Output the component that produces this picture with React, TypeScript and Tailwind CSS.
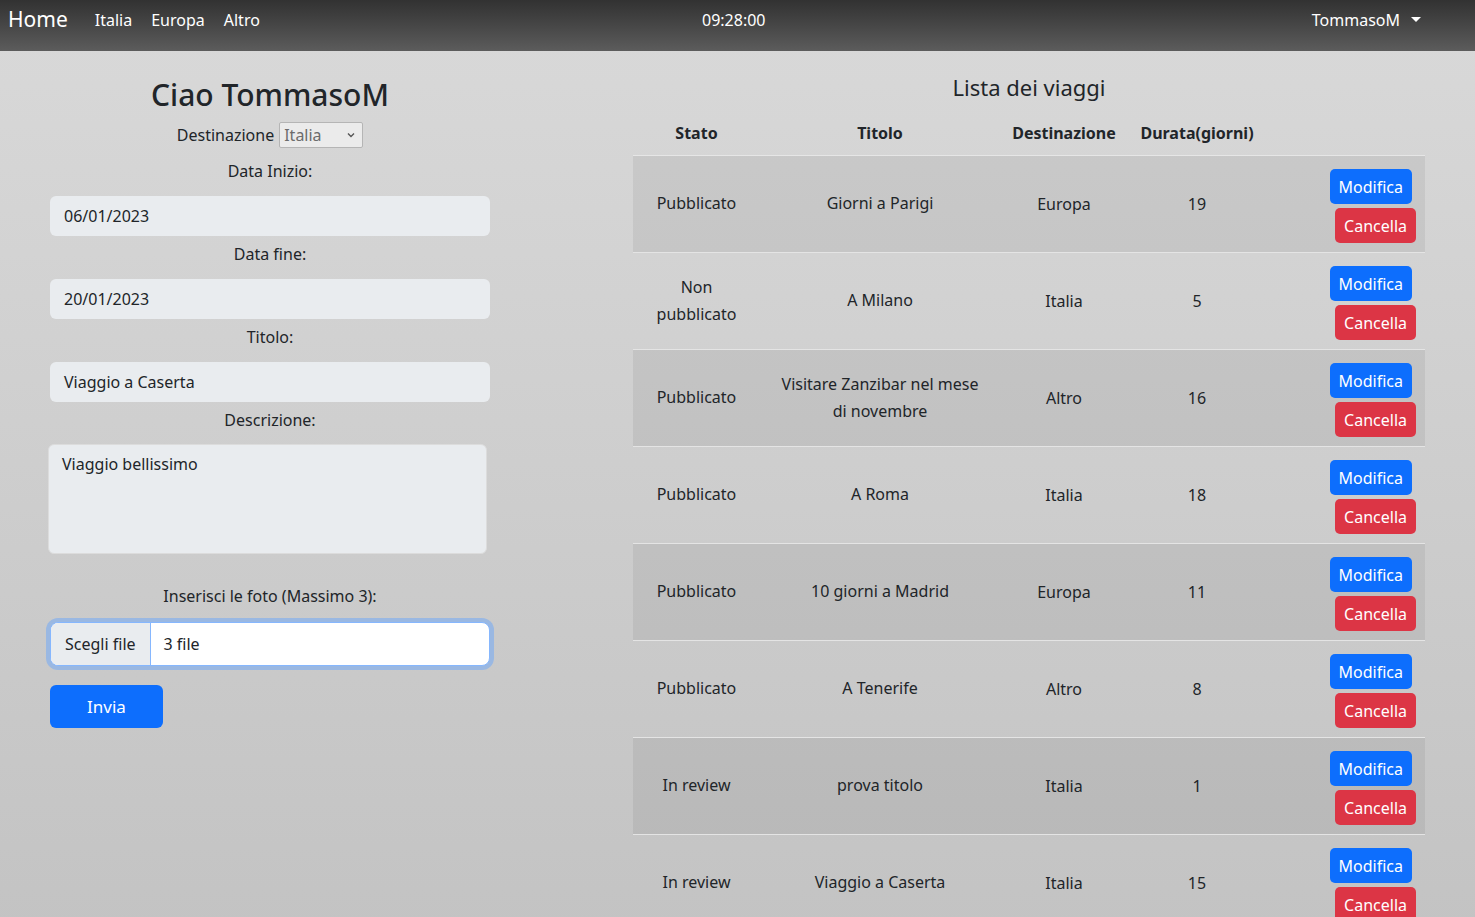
const trips = [
  { stato: 'Pubblicato', titolo: 'Giorni a Parigi', dest: 'Europa', durata: 19 },
  { stato: 'Non pubblicato', titolo: 'A Milano', dest: 'Italia', durata: 5 },
  { stato: 'Pubblicato', titolo: 'Visitare Zanzibar nel mese di novembre', dest: 'Altro', durata: 16 },
  { stato: 'Pubblicato', titolo: 'A Roma', dest: 'Italia', durata: 18 },
  { stato: 'Pubblicato', titolo: '10 giorni a Madrid', dest: 'Europa', durata: 11 },
  { stato: 'Pubblicato', titolo: 'A Tenerife', dest: 'Altro', durata: 8 },
  { stato: 'In review', titolo: 'prova titolo', dest: 'Italia', durata: 1 },
  { stato: 'In review', titolo: 'Viaggio a Caserta', dest: 'Italia', durata: 15 },
];

function Field({ label, value }: { label: string; value: string }) {
  return (
    <>
      <div className="text-center leading-6 mt-[6px] mb-[13px]">{label}</div>
      <div className="h-[40px] rounded-[6px] bg-[#e9ecef] px-[14px] flex items-center">{value}</div>
    </>
  );
}

export default function App() {
  return (
    <div
      className="min-h-[917px] text-[#212529] text-[16px] bg-gradient-to-b from-[#d9d9d9] to-[#c3c3c3]"
      style={{ fontFamily: '"Noto Sans", sans-serif' }}
    >
      <nav className="h-[51px] bg-gradient-to-b from-[#323232] to-[#5c5c5c] text-white flex items-center relative">
        <span className="ml-[8px] text-[21px] -mt-[11px]">Home</span>
        <div className="flex gap-[19px] ml-[27px] -mt-[12px] text-[16px]">
          <span>Italia</span>
          <span>Europa</span>
          <span>Altro</span>
        </div>
        <span className="absolute left-[702px] top-[8px] text-[16px]">09:28:00</span>
        <div className="ml-auto mr-[54px] -mt-[12px] flex items-center gap-[11px]">
          <span>TommasoM</span>
          <span className="w-0 h-0 border-l-[5px] border-r-[5px] border-t-[5px] border-l-transparent border-r-transparent border-t-white" />
        </div>
      </nav>

      <div className="flex">
        <div className="ml-[50px] w-[440px]">
          <h1 className="text-center text-[30px] font-medium mt-[25px] leading-[38px]">Ciao TommasoM</h1>
          <div className="flex justify-center items-center gap-[5px] mt-[8px] mb-[11px]">
            <span>Destinazione</span>
            <span className="h-[26px] w-[84px] border border-[#b5b5b5] bg-[#ebebeb] text-[#6c6c6c] flex items-center justify-between px-[4px] rounded-[2px]">
              Italia
              <svg width="10" height="10" viewBox="0 0 10 10" className="mr-[2px]">
                <path d="M2 3.5 L5 6.5 L8 3.5" fill="none" stroke="#555" strokeWidth="1.4" />
              </svg>
            </span>
          </div>
          <Field label="Data Inizio:" value="06/01/2023" />
          <Field label="Data fine:" value="20/01/2023" />
          <Field label="Titolo:" value="Viaggio a Caserta" />
          <div className="text-center leading-6 mt-[6px] mb-[12px]">Descrizione:</div>
          <div className="h-[110px] w-[439px] -ml-[2px] rounded-[6px] bg-[#e9ecef] border border-[#dcdcdc] px-[13px] py-[7px]">Viaggio bellissimo</div>
          <div className="text-center leading-6 mt-[30px] mb-[14px]">Inserisci le foto (Massimo 3):</div>
          <div className="h-[44px] rounded-[8px] ring-4 ring-[#9ab8e2] border border-[#86b7fe] bg-white flex overflow-hidden">
            <span className="bg-[#e9ecef] px-[14px] flex items-center border-r border-[#86b7fe]">Scegli file</span>
            <span className="px-[13px] flex items-center">3 file</span>
          </div>
          <button className="mt-[19px] w-[113px] h-[43px] rounded-[6px] bg-[#0d6efd] text-white text-[17px]">Invia</button>
        </div>

        <div className="ml-[143px] w-[792px]">
          <h2 className="text-center text-[22px] mt-[21px] leading-[30px]">Lista dei viaggi</h2>
          <table className="w-full mt-[11px] border-collapse text-center">
            <thead>
              <tr className="h-[42px] border-b border-[#e6e6e6]">
                <th className="w-[127px] font-bold pb-[2px]">Stato</th>
                <th className="w-[240px] font-bold pb-[2px]">Titolo</th>
                <th className="w-[128px] font-bold pb-[2px]">Destinazione</th>
                <th className="w-[138px] font-bold pb-[2px]">Durata(giorni)</th>
                <th />
              </tr>
            </thead>
            <tbody>
              {trips.map((t, i) => (
                <tr key={i} className={`h-[97px] border-b border-[#e4e4e4] ${i % 2 === 0 ? 'bg-black/[0.06]' : ''}`}>
                  <td className="px-[8px] leading-[27px]">{t.stato}</td>
                  <td className="px-[20px] leading-[27px]">{t.titolo}</td>
                  <td className="px-[8px]">{t.dest}</td>
                  <td className="px-[8px]">{t.durata}</td>
                  <td className="pr-[9px] pt-[5px]">
                    <div className="flex flex-col items-end gap-[4px]">
                      <button className="mr-[4px] h-[35px] px-[9px] rounded-[5px] bg-[#0d6efd] text-white">Modifica</button>
                      <button className="h-[35px] px-[9px] rounded-[5px] bg-[#dc3545] text-white">Cancella</button>
                    </div>
                  </td>
                </tr>
              ))}
            </tbody>
          </table>
        </div>
      </div>
    </div>
  );
}
